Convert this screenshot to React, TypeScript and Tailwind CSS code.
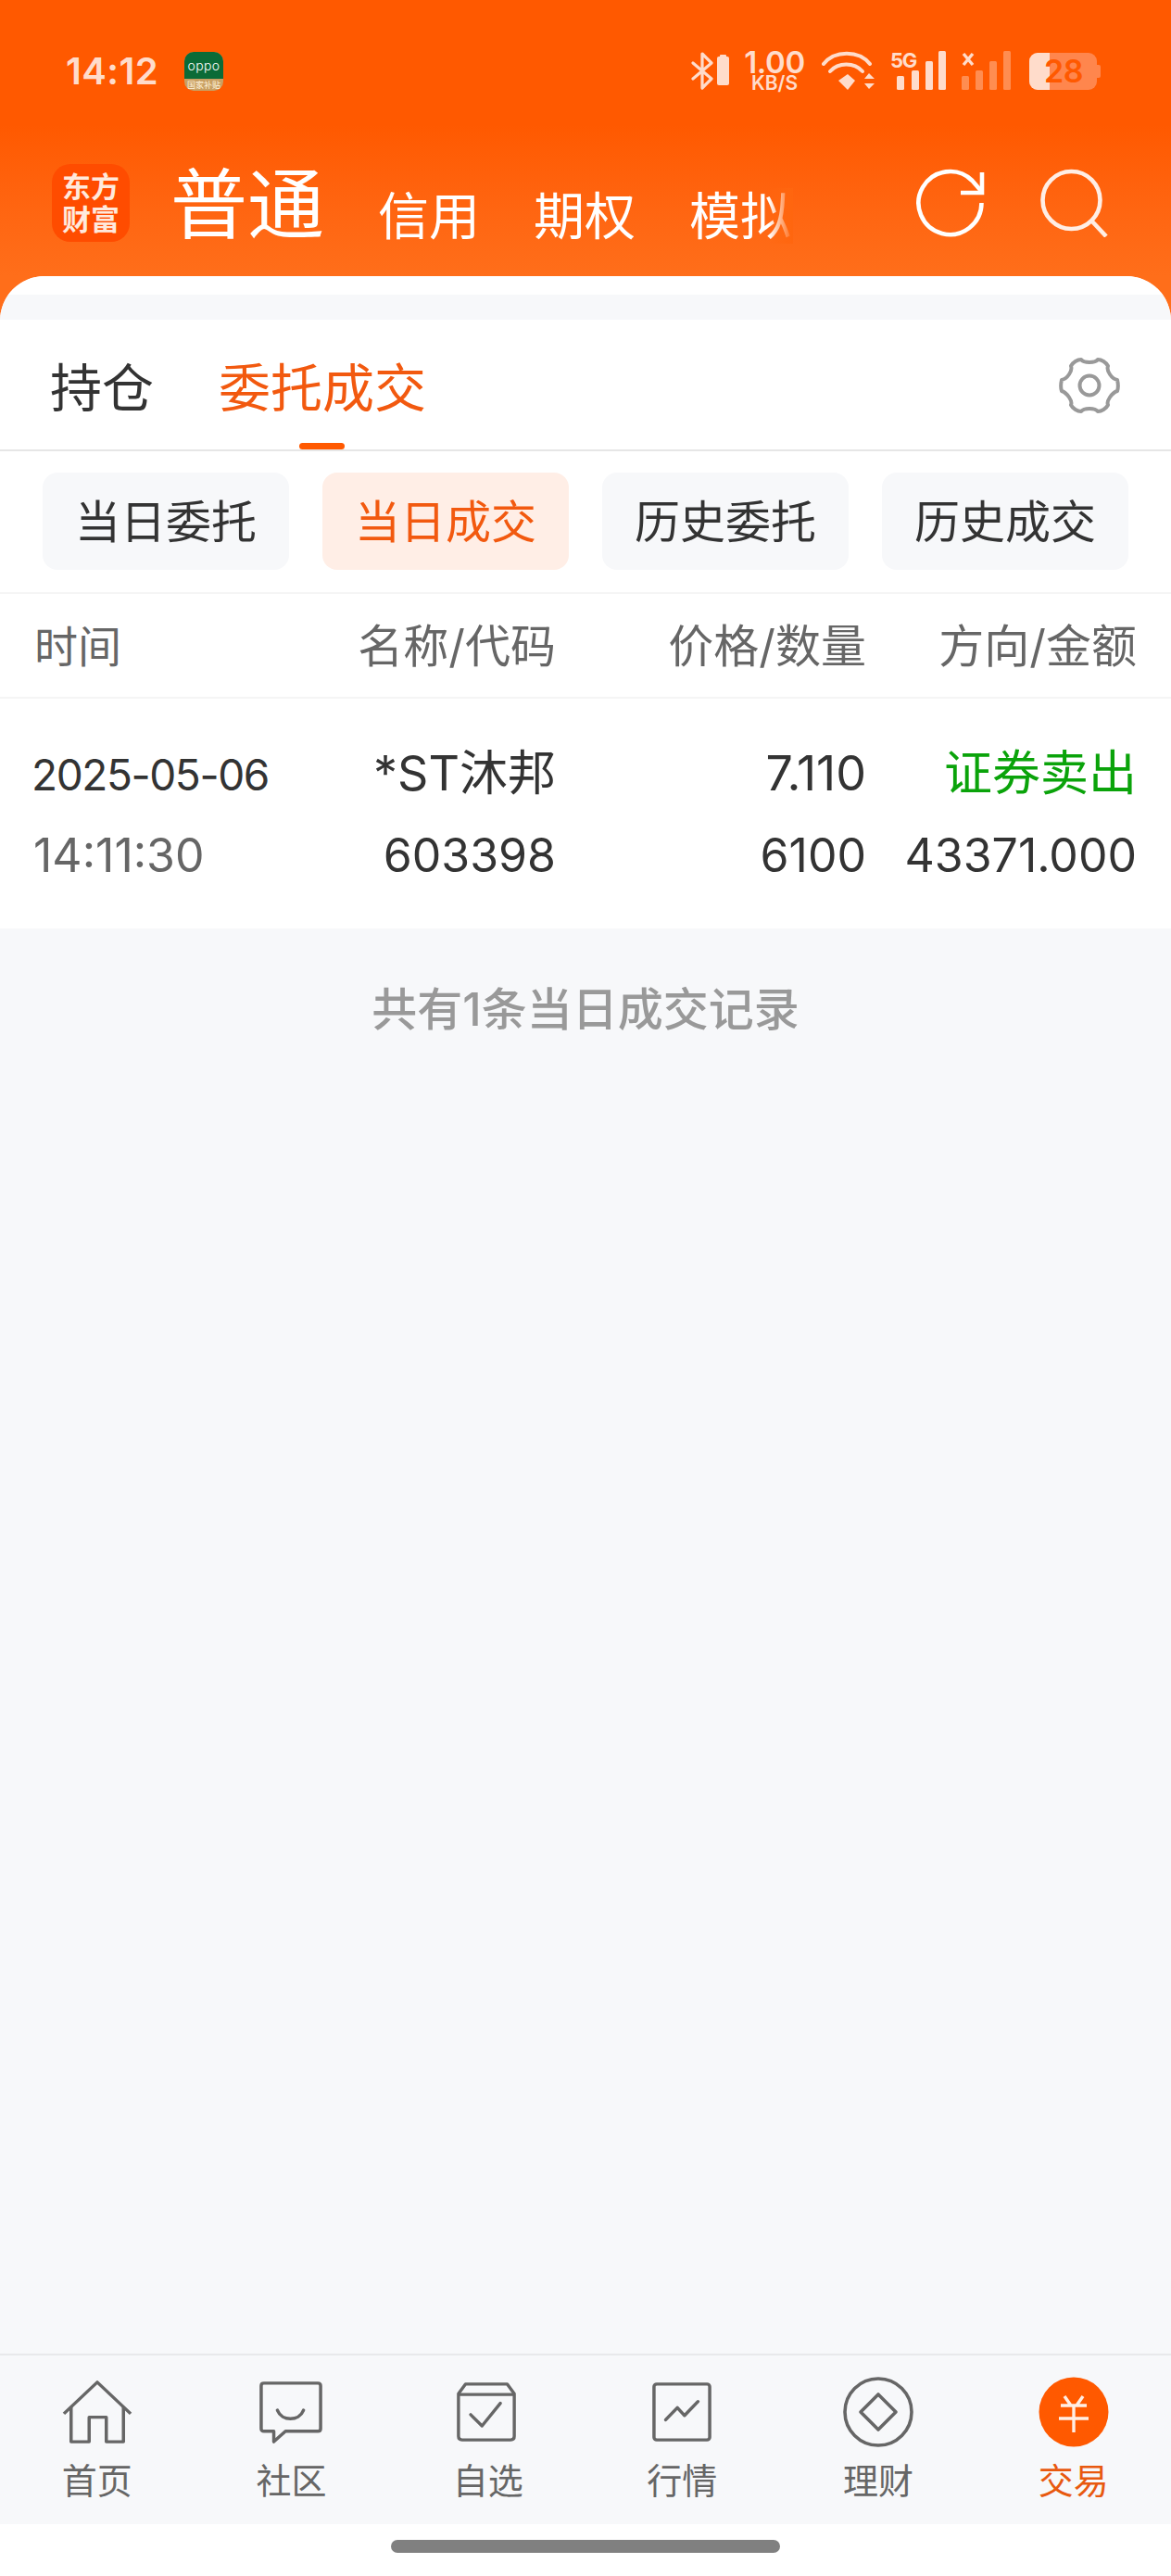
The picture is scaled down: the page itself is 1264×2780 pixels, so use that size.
const SANS = "font-['Inter','Noto_Sans_CJK_SC',sans-serif]";

function Oppo() {
  return (
    <div className="w-[42px] h-[42px] rounded-[10px] overflow-hidden flex flex-col bg-[#c9a063]">
      <div className="h-[29px] bg-[#0b6b37] flex items-center justify-center text-white text-[14px] leading-none tracking-[0.4px] font-light font-['Inter',sans-serif]">oppo</div>
      <div className="flex-1 flex items-center justify-center text-[#fff3dc] text-[9px] leading-none whitespace-nowrap">国家补贴</div>
    </div>
  );
}

function StatusIcons() {
  const c = "#ffdccb";
  return (
    <div className="flex items-start h-[43px]">
      <svg width="41" height="43" viewBox="0 0 41 43" fill="none">
        <path d="M2 13 L22 30 L12 40 V3 L22 13 L2 30" stroke={c} strokeWidth="3.2" strokeLinejoin="round" strokeLinecap="round" />
        <rect x="28" y="6" width="13" height="31" rx="2" fill={c} />
        <rect x="31" y="4" width="7" height="3" rx="1" fill={c} />
      </svg>
      <div className="w-[66px] ml-[16px] mt-[-2px] flex flex-col items-center text-[#ffdccb] font-semibold font-['Inter',sans-serif]">
        <span className="text-[33px] leading-[28px] tracking-[-0.4px]">1.00</span>
        <span className="text-[21px] leading-[18px]">KB/S</span>
      </div>
      <svg width="58" height="43" viewBox="0 0 58 43" fill="none" className="ml-[18px]">
        <path d="M2 14 C14 -1 40 -1 52 14" stroke={c} strokeWidth="4" strokeLinecap="round" />
        <path d="M9 22 C18 12 35 12 44 22" stroke={c} strokeWidth="4" strokeLinecap="round" />
        <path d="M18 32 L28 25 L36 32 L28 42 Z" fill={c} />
        <path d="M46 30 L51 24 L57 30 Z M46 35 H57 L51 41 Z" fill={c} />
      </svg>
      <svg width="60" height="43" viewBox="0 0 60 43" className="ml-[16px] overflow-visible">
        <text x="0" y="18" fontSize="22" fontWeight="700" fill={c} fontFamily="Inter, sans-serif" letterSpacing="-1.2">5G</text>
        <rect x="7" y="27" width="8" height="15" rx="1.5" fill={c} />
        <rect x="23" y="21" width="8" height="21" rx="1.5" fill={c} />
        <rect x="38" y="11" width="8" height="31" rx="1.5" fill={c} />
        <rect x="52" y="0" width="8" height="42" rx="1.5" fill={c} />
      </svg>
      <svg width="53" height="43" viewBox="0 0 53 43" className="ml-[17px]">
        <path d="M2 3 L12 15 M12 3 L2 15" stroke={c} strokeWidth="3.4" />
        <g fill={c} opacity="0.4">
          <rect x="0" y="27" width="8" height="15" rx="1.5" />
          <rect x="15" y="21" width="8" height="21" rx="1.5" />
          <rect x="30" y="11" width="8" height="31" rx="1.5" />
          <rect x="45" y="0" width="8" height="42" rx="1.5" />
        </g>
      </svg>
      <div className="ml-[20px] mt-[2px] flex items-center h-[40px] relative">
        <div className="w-[73px] h-[40px] rounded-[9px] overflow-hidden bg-[#ff864d]">
          <div className="w-[22px] h-full bg-[#ffdccb]" />
        </div>
        <div className="w-[4px] h-[14px] rounded-r-[2px] bg-[#ff864d]" />
        <span className="absolute left-[15px] top-0 w-[44px] text-center text-[#ff5900] font-semibold text-[34px] leading-[40px] font-['Inter',sans-serif] tracking-[-0.5px]">28</span>
      </div>
    </div>
  );
}

function Header() {
  return (
    <div className="h-[298px] bg-gradient-to-b from-[#ff5900] from-[45%] to-[#ff6e1a] flex flex-col">
      <div className="h-[177px] pt-[56px] flex items-start pl-[71px] pr-[76px]">
        <span className="text-[40px] leading-[42px] font-semibold text-[#ffdccb] font-['Inter',sans-serif] w-[128px] tracking-[0.4px]">14:12</span>
        <Oppo />
        <div className="ml-auto mt-[-1px]"><StatusIcons /></div>
      </div>
      <div className="flex items-start pl-[56px] pr-[67px] h-[90px]">
        <div className="w-[84px] h-[84px] rounded-[20px] bg-[#ff4c00] text-[#ffe9dc] font-bold text-[31px] leading-[35px] flex flex-col items-center justify-center">
          <span>东方</span>
          <span>财富</span>
        </div>
        <span className="ml-[44px] text-[83px] leading-[90px] text-white w-[224px] mt-[-1px] whitespace-nowrap">普通</span>
        <div className="flex gap-[58px] text-white text-[55px] leading-[60px] mt-[26px] relative">
          <span className="w-[110px] whitespace-nowrap">信用</span>
          <span className="w-[110px] whitespace-nowrap">期权</span>
          <span className="w-[110px] whitespace-nowrap">模拟</span>
          <div className="absolute right-[-2px] top-0 w-[26px] h-full bg-gradient-to-r from-[#ff660f00] to-[#ff660f]" />
        </div>
        <div className="ml-auto flex gap-[60px] mt-[5px]">
          <svg width="74" height="74" viewBox="0 0 74 74" fill="none" stroke="#fff" strokeWidth="4.6">
            <path d="M70.5 37 A34 34 0 1 1 60.5 13 L70 24" />
            <path d="M71 4 V26 H48" />
          </svg>
          <svg width="74" height="74" viewBox="0 0 74 74" fill="none" stroke="#ffeee5" strokeWidth="4.6">
            <circle cx="33.5" cy="34" r="31" />
            <path d="M55 56 L71 73" />
          </svg>
        </div>
      </div>
    </div>
  );
}

function Tabs() {
  return (
    <div className="h-[142px] border-b-2 border-[#e6e6e6] bg-white flex items-start pl-[54px] pr-[55px]">
      <span className="text-[56px] leading-[80px] mt-[34px] text-[#333] w-[182px]">持仓</span>
      <div className="relative h-full">
        <span className="block text-[56px] leading-[80px] mt-[34px] text-[#f2590f] whitespace-nowrap">委托成交</span>
        <div className="absolute left-[87px] bottom-0 w-[49px] h-[7px] rounded-full bg-[#ff5900]" />
      </div>
      <svg width="66" height="66" viewBox="0 0 66 66" fill="none" stroke="#999" strokeWidth="4" className="ml-auto mt-[38px]">
        <path d="M24 5 C27 9 39 9 42 5 C46 5 51 8 53 12 C51 17 57 26 63 27 C64 31 64 36 63 39 C57 41 51 50 53 54 C51 58 46 61 42 61 C39 57 27 57 24 61 C20 61 15 58 13 54 C15 50 9 41 3 39 C2 36 2 31 3 27 C9 26 15 17 13 12 C15 8 20 5 24 5 Z" strokeLinejoin="round" />
        <circle cx="33" cy="33" r="10.5" />
      </svg>
    </div>
  );
}

function SubTabs() {
  const items = ["当日委托", "当日成交", "历史委托", "历史成交"];
  return (
    <div className="h-[154px] bg-white border-b-2 border-[#f5f5f5] flex items-start pt-[23px] pl-[46px] gap-[36px]">
      {items.map((t, i) => (
        <div
          key={t}
          className={
            i === 1
              ? "w-[266px] h-[105px] pt-[2px] rounded-[16px] bg-[#ffeee6] text-[#f2590f] text-[49px] flex items-center justify-center"
              : "w-[266px] h-[105px] pt-[2px] rounded-[16px] bg-[#f7f8fa] text-[#333] text-[49px] flex items-center justify-center"
          }
        >
          {t}
        </div>
      ))}
    </div>
  );
}

function Columns({ a, b, c, d, className }: { a: React.ReactNode; b: React.ReactNode; c: React.ReactNode; d: React.ReactNode; className: string }) {
  return (
    <div className={"grid grid-cols-[322px_241px_335px_292px] pl-[37px] items-center whitespace-nowrap " + className}>
      <div>{a}</div>
      <div className="text-right">{b}</div>
      <div className="text-right">{c}</div>
      <div className="text-right">{d}</div>
    </div>
  );
}

function Nav() {
  const s = "#666";
  const items: { label: string; icon: React.ReactNode; active?: boolean; col?: string; ic?: string }[] = [
    {
      label: "首页",
      col: "mr-[1px]",
      icon: (
        <svg width="76" height="68" viewBox="0 0 78 72" fill="none" stroke={s} strokeWidth="3.6" strokeLinejoin="round" preserveAspectRatio="none">
          <path d="M2 38 L39 2 L76 38" />
          <path d="M10 30 V70 H30 V42 H49 V70 H68 V30" />
        </svg>
      ),
    },
    {
      label: "社区",
      col: "mr-[3px]",
      icon: (
        <svg width="68" height="68" viewBox="0 0 70 72" fill="none" stroke={s} strokeWidth="3.6" strokeLinejoin="round" preserveAspectRatio="none">
          <path d="M5 3 H65 Q68 3 68 6 V55 Q68 58 65 58 H29 L16 70 V58 H5 Q2 58 2 55 V6 Q2 3 5 3 Z" />
          <path d="M20 34 C25 47 44 47 49 34" strokeLinecap="round" />
        </svg>
      ),
    },
    {
      label: "自选",
      ic: "mr-[4px]",
      icon: (
        <svg width="64" height="64" viewBox="0 0 68 68" fill="none" stroke={s} strokeWidth="3.6" strokeLinejoin="round">
          <path d="M2 13 L10 2 H58 L66 13 V62 Q66 66 62 66 H6 Q2 66 2 62 Z" />
          <path d="M2 14 H66" />
          <path d="M16 37 L29 50 L50 24" strokeLinecap="round" />
        </svg>
      ),
    },
    {
      label: "行情",
      col: "mr-[2px]",
      icon: (
        <svg width="64" height="64" viewBox="0 0 66 68" fill="none" stroke={s} strokeWidth="3.6" strokeLinejoin="round" preserveAspectRatio="none">
          <rect x="2" y="2" width="62" height="64" rx="3" />
          <path d="M15 43 L28 29 L36 38 L51 22" strokeLinecap="round" />
        </svg>
      ),
    },
    {
      label: "理财",
      icon: (
        <svg width="76" height="76" viewBox="0 0 76 76" fill="none" stroke={s} strokeWidth="3.6" strokeLinejoin="round">
          <circle cx="38" cy="38" r="36" />
          <path d="M38 19 L57 38 L38 57 L19 38 Z" />
        </svg>
      ),
    },
    {
      label: "交易",
      active: true,
      icon: (
        <svg width="76" height="76" viewBox="0 0 76 76" fill="none">
          <circle cx="38" cy="38" r="37.5" fill="#ff5900" />
          <path d="M28 21 L35 31 M48 21 L41 31 M24 31 H52 M22 45 H54 M38 31 V60" stroke="#ffeee5" strokeWidth="3.4" />
        </svg>
      ),
    },
  ];
  return (
    <div className="border-t-2 border-[#e8e9eb] bg-[#f7f8fa] h-[184px] grid grid-cols-6">
      {items.map((it) => (
        <div key={it.label} className={"flex flex-col items-center pt-[22px] " + (it.col ?? "")}>
          <div className={"h-[78px] flex items-center justify-center " + (it.ic ?? "")}>{it.icon}</div>
          <span className={"text-[38px] leading-[44px] mt-[13px] " + (it.active ? "text-[#e8590f]" : "text-[#666]")}>{it.label}</span>
        </div>
      ))}
    </div>
  );
}

export default function App() {
  return (
    <div className={"w-[1264px] h-[2780px] overflow-hidden flex flex-col bg-[#ff6e1a] " + SANS}>
      <Header />
      <div className="flex-1 flex flex-col bg-white rounded-t-[48px] overflow-hidden">
        <div className="h-[20px] bg-white shrink-0" />
        <div className="h-[27px] bg-[#f7f8fa] shrink-0" />
        <Tabs />
        <SubTabs />
        <Columns
          className="h-[113px] pt-[2px] bg-white border-b-2 border-[#f5f5f5] text-[49px] text-[#666]"
          a={<span className="text-[47px]">时间</span>}
          b="名称/代码"
          c="价格/数量"
          d="方向/金额"
        />
        <div className="h-[248px] bg-white flex flex-col justify-center pt-[3px]">
          <Columns
            className="h-[88px] text-[52px] text-[#333]"
            a={<span className="text-[46px] tracking-[-1.4px] ml-[-3px]">2025-05-06</span>}
            b="*ST沐邦"
            c="7.110"
            d={<span className="text-[#0aa30a]">证券卖出</span>}
          />
          <Columns
            className="h-[90px] text-[50px] text-[#333]"
            a={<span className="text-[#666] ml-[-1px]">14:11:30</span>}
            b="603398"
            c="6100"
            d="43371.000"
          />
        </div>
        <div className="flex-1 bg-[#f7f8fa] flex flex-col">
          <div className="h-[176px] flex items-center justify-center text-[49px] font-medium text-[#999]">共有1条当日成交记录</div>
        </div>
        <Nav />
        <div className="h-[56px] bg-white flex justify-center pt-[17px] shrink-0">
          <div className="w-[420px] h-[14px] rounded-full bg-[#808080]" />
        </div>
      </div>
    </div>
  );
}
